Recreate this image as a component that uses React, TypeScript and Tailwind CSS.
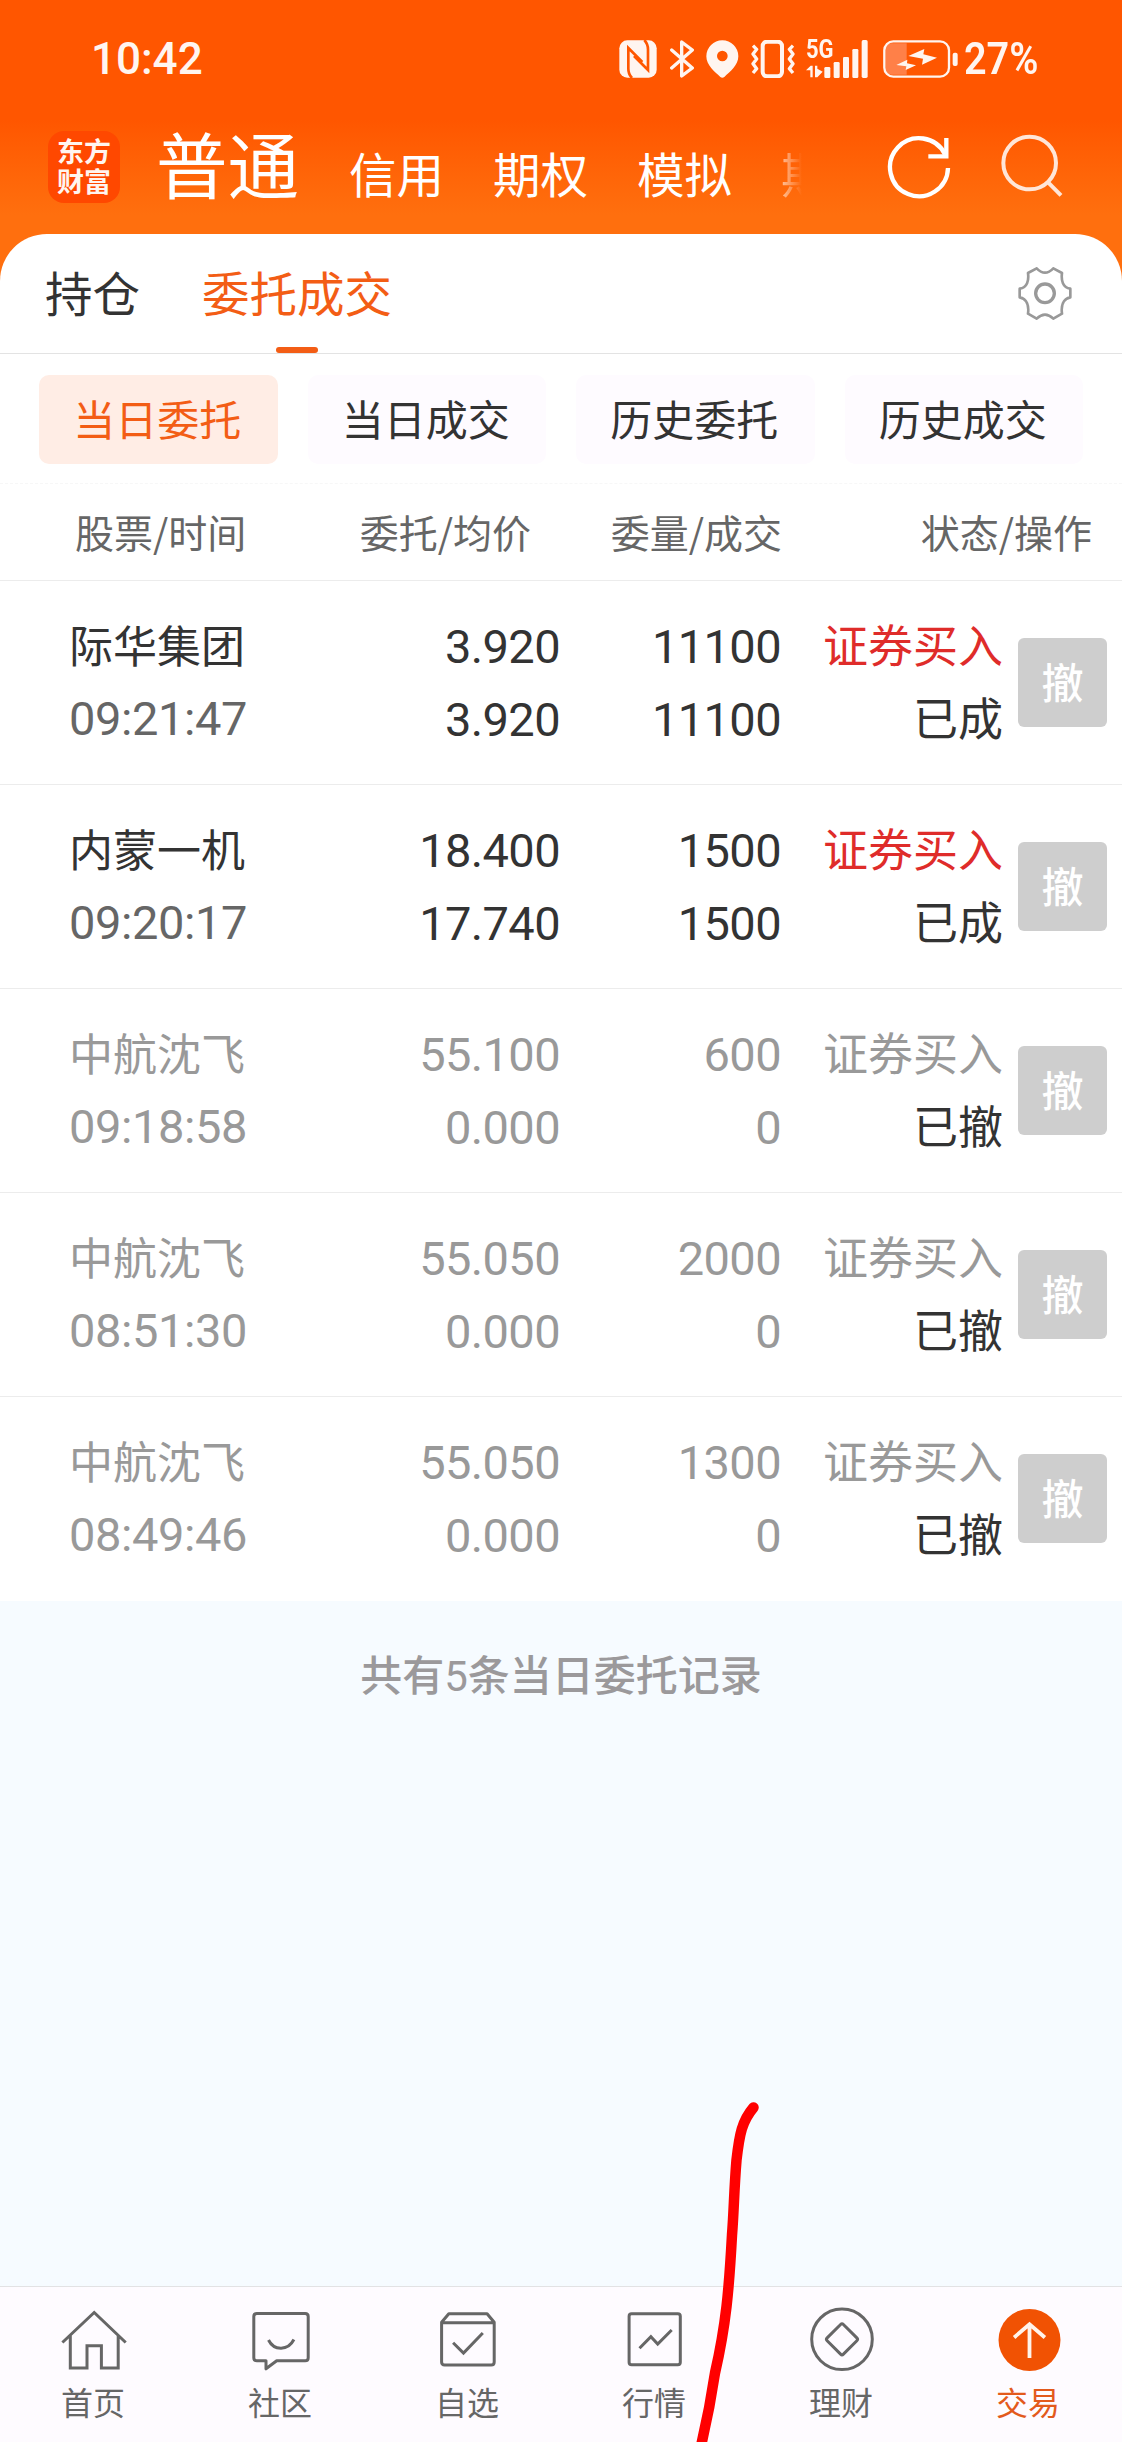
import type { ReactNode } from "react";
import clsx from "clsx";

type Order = {
  name: string;
  time: string;
  price: string;
  avgPrice: string;
  amount: string;
  filled: string;
  status: string;
  cancelled: boolean;
};

const orders: Order[] = [
  { name: "际华集团", time: "09:21:47", price: "3.920", avgPrice: "3.920", amount: "11100", filled: "11100", status: "已成", cancelled: false },
  { name: "内蒙一机", time: "09:20:17", price: "18.400", avgPrice: "17.740", amount: "1500", filled: "1500", status: "已成", cancelled: false },
  { name: "中航沈飞", time: "09:18:58", price: "55.100", avgPrice: "0.000", amount: "600", filled: "0", status: "已撤", cancelled: true },
  { name: "中航沈飞", time: "08:51:30", price: "55.050", avgPrice: "0.000", amount: "2000", filled: "0", status: "已撤", cancelled: true },
  { name: "中航沈飞", time: "08:49:46", price: "55.050", avgPrice: "0.000", amount: "1300", filled: "0", status: "已撤", cancelled: true },
];

const accountTabs = ["信用", "期权", "模拟"];
const filters = ["当日委托", "当日成交", "历史委托", "历史成交"];

const digitClass = "font-['Roboto','Noto_Sans_CJK_SC',sans-serif]";

function StatusBar() {
  return (
    <div className="flex h-[117px] items-center pl-[91px] text-[#fff5f0]">
      <span className={clsx(digitClass, "w-[528px] text-[44px] leading-[44px] font-medium")}>10:42</span>

      <svg width="38" height="38" viewBox="0 0 114 114" fill="none">
        <rect x="1" y="1" width="112" height="112" rx="24" fill="currentColor" />
        <path d="M39 114Q28 102 28 86V24L70 66M76 0Q87 12 87 28V90L45 48" stroke="#ff5600" strokeWidth="8" />
      </svg>

      <svg className="ml-3" width="27" height="38" viewBox="0 0 81 114" fill="none" stroke="currentColor" strokeWidth="10" strokeLinejoin="round" strokeLinecap="round">
        <path d="M8 30L70 84L38 108V6L70 30L8 84" />
      </svg>

      <svg className="ml-[10px]" width="33" height="38" viewBox="0 0 99 114" fill="currentColor">
        <path fillRule="evenodd" d="M49 1A48 48 0 0 1 97 49C97 76 72 95 55 111Q49 115 43 111C26 95 1 76 1 49A48 48 0 0 1 49 1ZM49 32A16 16 0 1 0 49 64A16 16 0 1 0 49 32Z" />
      </svg>

      <svg className="ml-[11px]" width="46" height="38" viewBox="0 0 138 114" fill="none" stroke="currentColor" strokeWidth="10">
        <rect x="38" y="5" width="58" height="104" rx="13" strokeWidth="12" />
        <path d="M9 17L20 28L9 42L20 57L9 71L20 86L9 99M129 17L118 28L129 42L118 57L129 71L118 86L129 99" strokeLinejoin="round" />
      </svg>

      <div className="relative ml-[10px] h-[38px] w-[62px]">
        <span className={clsx(digitClass, "absolute top-0 left-0 origin-left scale-x-[0.88] text-[25px] leading-[19px] font-bold")}>5G</span>
        <svg width="62" height="38" viewBox="0 0 186 114" fill="currentColor">
          <path d="M0 91L14 77H20V112H13V91ZM27 77H34V86L50 95L34 112H27Z" />
          <rect x="55" y="81" width="18" height="33" rx="4" />
          <rect x="83" y="66" width="18" height="48" rx="4" />
          <rect x="111" y="51" width="18" height="63" rx="4" />
          <rect x="139" y="27" width="18" height="87" rx="4" />
          <rect x="167" y="0" width="18" height="114" rx="5" />
        </svg>
      </div>

      <svg className="ml-[15px]" width="75" height="38" viewBox="0 0 225 114" fill="none">
        <path d="M8 25Q8 10 26 10H71V104H26Q8 104 8 90Z" fill="#ff8048" />
        <rect x="4" y="4" width="194" height="106" rx="27" stroke="currentColor" strokeWidth="7" />
        <path d="M76 48L124 27L121 43L162 53L117 74L120 56ZM40 75L73 59L72 70L99 76L68 90L70 79Z" fill="currentColor" />
        <rect x="209" y="38" width="15" height="40" rx="6" fill="currentColor" />
      </svg>

      <span className={clsx(digitClass, "ml-[6px] w-[76px] origin-left scale-x-[0.9] text-[44px] leading-[44px] font-semibold")}>27%</span>
    </div>
  );
}

function AccountHeader() {
  return (
    <div className="flex h-[117px] items-start pl-12 text-white">
      <div className="mt-[14px] flex h-[72px] w-[72px] flex-col items-center justify-center rounded-2xl bg-[#ff4800] pb-[3px] text-[27px] leading-[30px] font-bold text-[#fff5f0]">
        <span>东方</span>
        <span>财富</span>
      </div>
      <div className="-mt-[8px] ml-[36px] flex w-[646px] items-baseline gap-12 whitespace-nowrap">
        <span className="w-[145px] shrink-0 text-[71.5px] leading-[106px]">普通</span>
        {accountTabs.map((tab) => (
          <span key={tab} className="w-24 shrink-0 text-[47.5px] leading-[60px]">
            {tab}
          </span>
        ))}
        {/* next tab fades out under the toolbar icons */}
        <span className="shrink-0 bg-gradient-to-r from-white/60 to-white/0 to-[21px] bg-clip-text text-[47.5px] leading-[60px] text-transparent">期</span>
      </div>
      <svg className="mt-[18px] ml-[85px] shrink-0" width="64" height="64" viewBox="0 0 192 192" fill="none" stroke="currentColor" strokeWidth="13">
        <path d="M183 99A87 87 0 1 1 174 58" />
        <path d="M178 9V64H124" />
      </svg>
      <svg className="mt-[17px] ml-[50px] shrink-0" width="63" height="64" viewBox="0 0 189 192" fill="none" stroke="#ffe6d8" strokeWidth="12">
        <circle cx="86" cy="87" r="79" />
        <path d="M139 143L180 184" />
      </svg>
    </div>
  );
}

function PageTabs() {
  return (
    <div className="flex h-[120px] items-start border-b border-[#e3e3e3] pl-[45px] text-[47.5px] leading-[60px]">
      <span className="mt-[28px] text-[#333]">持仓</span>
      <div className="ml-[62px] flex h-[119px] flex-col items-center justify-between text-[#f35d15]">
        <span className="mt-[28px]">委托成交</span>
        <span className="h-[6px] w-[42px] rounded-full bg-[#f35d15]" />
      </div>
      <svg className="mt-[33px] ml-auto mr-[50px]" width="54" height="53" viewBox="0 0 160 159" fill="none" stroke="#999" strokeWidth="8" strokeLinejoin="round">
        <path d="M55 4Q80 30 105 4L131 18C128 40 133 62 156 65V91C133 95 128 118 131 140L105 155Q80 130 55 155L29 140C32 118 27 95 4 91V65C27 62 32 40 29 18Z" />
        <circle cx="80" cy="79" r="28" strokeWidth="10" />
      </svg>
    </div>
  );
}

function FilterBar() {
  return (
    <div className="flex h-[130px] gap-[30px] border-b border-dashed border-[#f7f7f7] pt-[21px] pl-[39px] pr-[39px]">
      {filters.map((filter, i) => (
        <button
          key={filter}
          className={clsx(
            "h-[89px] flex-1 rounded-[10px] pr-[2px] pb-[3px] text-[42px] leading-none",
            i === 0 ? "bg-[#ffede5] text-[#f35d15]" : "bg-[#fefbff] text-[#333]",
          )}
        >
          {filter}
        </button>
      ))}
    </div>
  );
}

function ColumnHeader() {
  return (
    <div className="flex h-[97px] items-center border-b border-[#ececec] pb-[2px] text-[39px] leading-none whitespace-nowrap text-[#666]">
      <span className="w-[284px] pl-[75px]">股票/时间</span>
      <span className="w-[247px] text-right">委托/均价</span>
      <span className="w-[251px] text-right">委量/成交</span>
      <span className="w-[310px] text-right">状态/操作</span>
    </div>
  );
}

function OrderRow({ order, last }: { order: Order; last: boolean }) {
  const muted = order.cancelled;
  const mainColor = muted ? "text-[#999]" : "text-[#333]";

  return (
    <div className={clsx("flex h-[204px] whitespace-nowrap", !last && "border-b border-[#ececec]", mainColor)}>
      <div className="flex w-[310px] flex-col pt-[29px] pl-[69px]">
        <span className="h-[73px] text-[44px] leading-[68px]">{order.name}</span>
        <span className={clsx(digitClass, "text-[47px] leading-[72px] tracking-[-0.4px]", muted ? "text-[#999]" : "text-[#666]")}>{order.time}</span>
      </div>
      <div className={clsx(digitClass, "flex w-[250px] flex-col pt-[29px] text-right text-[47px] leading-[73px] tracking-[-0.6px]")}>
        <span>{order.price}</span>
        <span>{order.avgPrice}</span>
      </div>
      <div className={clsx(digitClass, "flex w-[221px] flex-col pt-[29px] text-right text-[47px] leading-[73px] tracking-[-0.6px]")}>
        <span>{order.amount}</span>
        <span>{order.filled}</span>
      </div>
      <div className="flex w-[222px] flex-col pt-[29px] text-right text-[45px] leading-[68px]">
        <span className={clsx("h-[73px]", !muted && "text-[#df2c2a]")}>证券买入</span>
        <span className="text-[#333]">{order.status}</span>
      </div>
      <button className="mt-[57px] ml-[15px] h-[89px] w-[89px] rounded-[6px] bg-[#cecece] pb-[3px] text-[42px] leading-none font-medium text-white">
        撤
      </button>
    </div>
  );
}

function NavItem({ label, active, children }: { label: string; active?: boolean; children: ReactNode }) {
  return (
    <div className={clsx("flex flex-1 flex-col items-center pt-5", active ? "text-[#e35a1c]" : "text-[#666]")}>
      <svg width="68" height="66" viewBox="0 0 68 66" fill="none" stroke="currentColor" strokeWidth="3">
        {children}
      </svg>
      <span className="mt-[8px] pr-px text-[32px] leading-[40px]">{label}</span>
    </div>
  );
}

function BottomNav() {
  return (
    <nav className="flex h-[156px] border-t border-[#e2e2e4] bg-[#fefbff]">
      <NavItem label="首页">
        <path d="M2.4 35.5L34.2 5.5L65.7 35.5M10.3 28V61H27V38.7H41.4V61H58.2V28" />
      </NavItem>
      <NavItem label="社区">
        <path d="M9.8 6.5H58.2Q61.2 6.5 61.2 9.5V50.7Q61.2 53.7 58.2 53.7H29.7L19 61.8V53.7H9.8Q6.8 53.7 6.8 50.7V9.5Q6.8 6.5 9.8 6.5Z" strokeLinejoin="round" />
        <path d="M21.5 33C27 44 41 44 46.9 32.5" />
      </NavItem>
      <NavItem label="自选">
        <path d="M7.6 15.3L14.8 6.7H53.1L60.2 15.3V55Q60.2 58 57.2 58H10.6Q7.6 58 7.6 55ZM7.6 15.8H60.2" strokeLinejoin="round" />
        <path d="M19.1 35.7L29.5 46L48.8 26" />
      </NavItem>
      <NavItem label="行情">
        <rect x="8.1" y="6.7" width="51.2" height="51" rx="2.5" />
        <path d="M18.5 41.3L29.9 29.7L36.7 37L50.7 23" />
      </NavItem>
      <NavItem label="理财">
        <circle cx="34" cy="32.3" r="30.3" />
        <rect x="22.5" y="20.8" width="23" height="23" rx="2" transform="rotate(45 34 32.3)" />
      </NavItem>
      <NavItem label="交易" active>
        <circle cx="34.5" cy="33" r="31" fill="#f15203" stroke="none" />
        <path d="M34.5 51V17.5M19.1 30.5L34.5 17.3L49.9 30.5" stroke="#fff3ea" strokeWidth="3.8" />
      </NavItem>
    </nav>
  );
}

export default function App() {
  return (
    <div className="relative flex h-[2442px] w-[1122px] flex-col overflow-hidden bg-[#f6fbff] font-['Noto_Sans_CJK_SC',sans-serif]">
      <div className="bg-gradient-to-b from-[#ff5600] from-[120px] to-[#ff6f0e] to-[215px]">
        <StatusBar />
        <AccountHeader />
        <div className="rounded-t-[47px] bg-white">
          <PageTabs />
          <FilterBar />
        </div>
      </div>
      <div className="bg-white">
        <ColumnHeader />
        {orders.map((order, i) => (
          <OrderRow key={order.time} order={order} last={i === orders.length - 1} />
        ))}
      </div>
      <p className="mt-[39px] flex-1 text-center text-[42px] leading-[66px] font-medium text-[#9b999b]">
        共有<span className={clsx(digitClass, "font-normal")}>5</span>条当日委托记录
      </p>
      <BottomNav />

      {/* hand-drawn marker line over the page */}
      <svg className="absolute top-[2090px] left-[680px]" width="100" height="352" viewBox="680 2090 100 352" fill="none">
        <path
          d="M753.5 2107.5C742 2121 739.5 2134 736.5 2160C734 2190 734 2210 732 2235C729 2290 726 2325 715 2373C711 2400 706 2425 700 2450"
          stroke="#ff0000"
          strokeWidth="10.5"
          strokeLinecap="round"
        />
      </svg>
    </div>
  );
}
